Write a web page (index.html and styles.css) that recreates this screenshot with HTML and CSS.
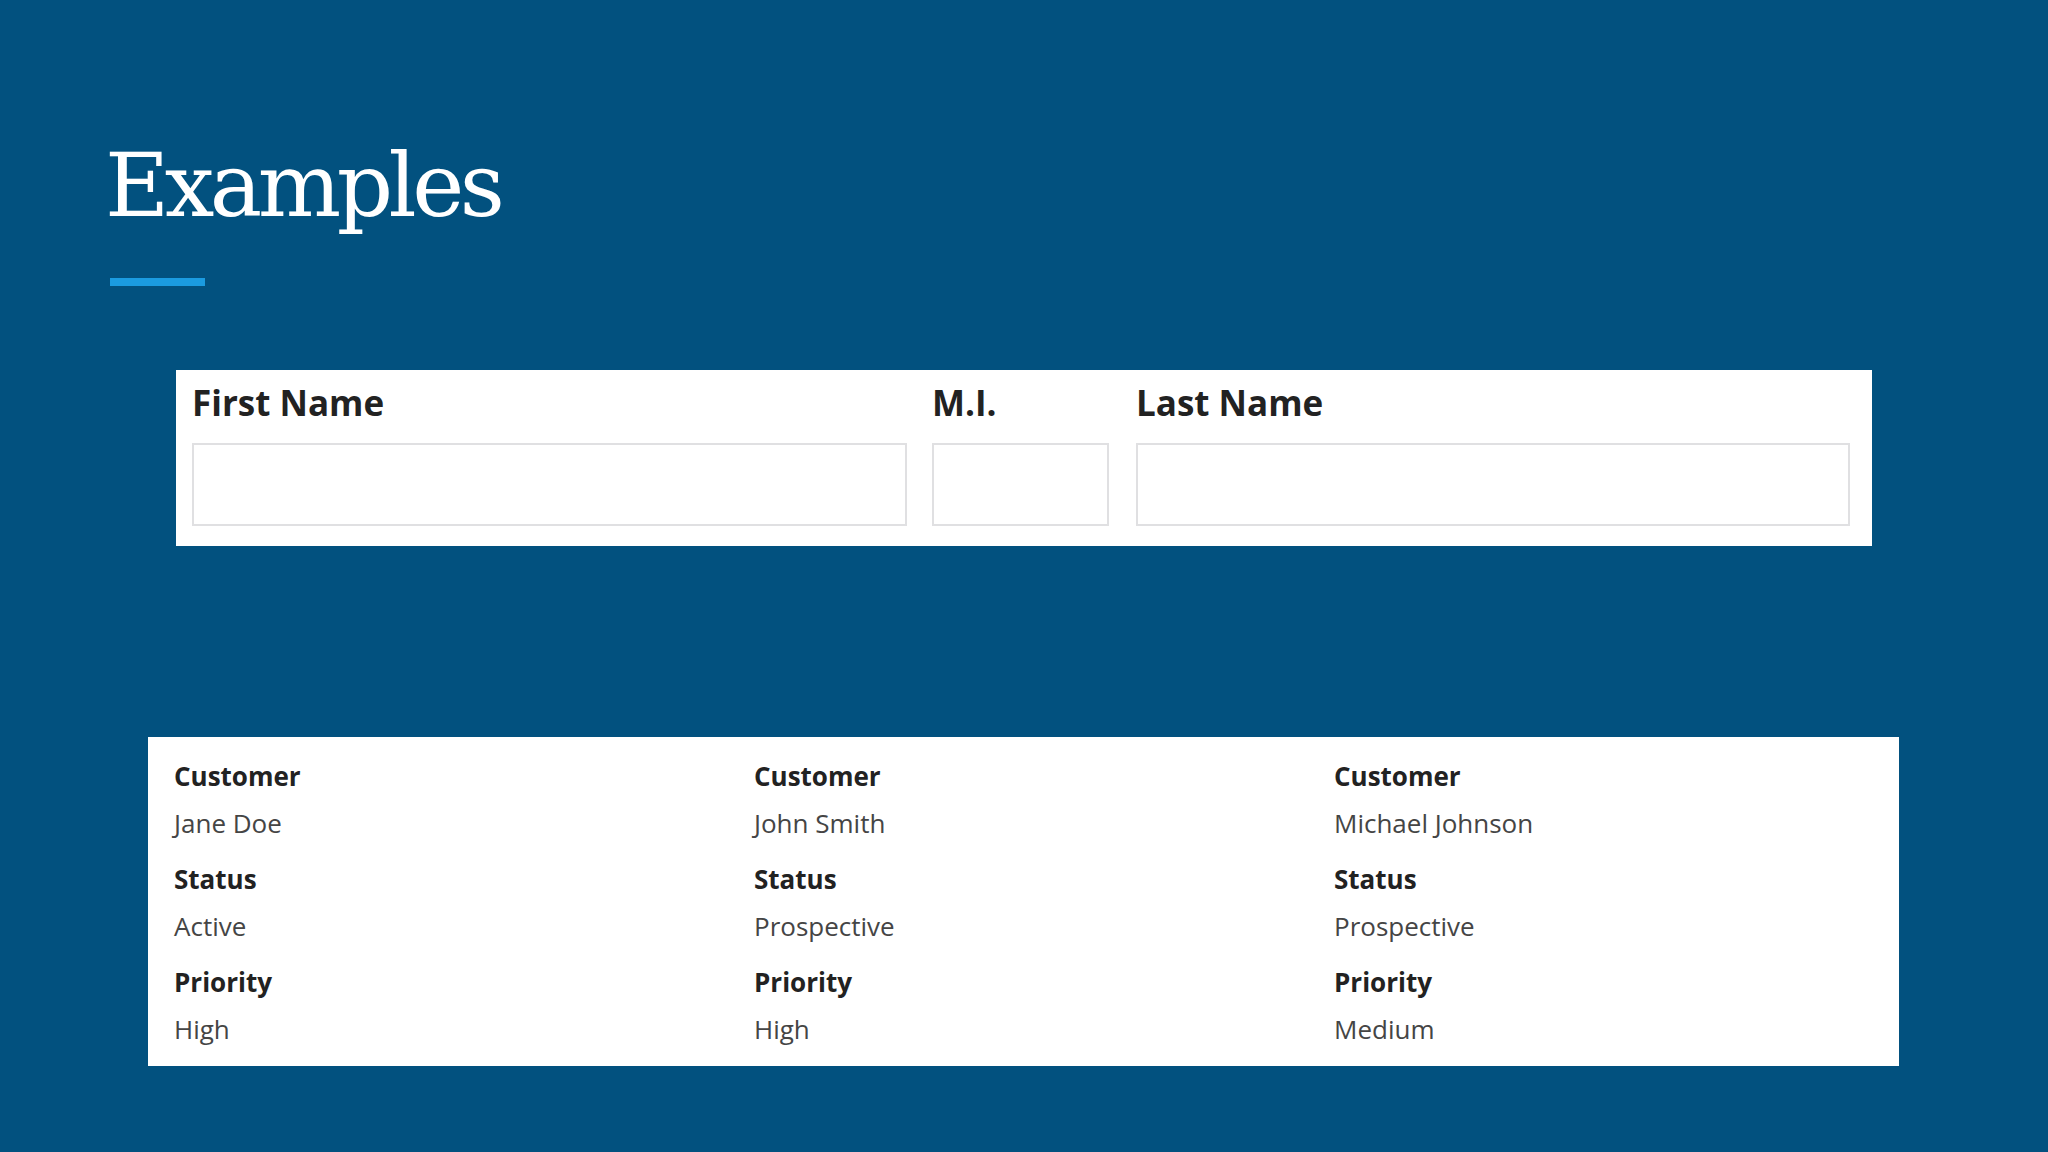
FILE: index.html
```html
<!DOCTYPE html>
<html lang="en">
<head>
<meta charset="utf-8">
<title>Examples</title>
<link rel="stylesheet" href="styles.css">
</head>
<body>
<main class="slide">
  <header class="slide-head">
    <h1 class="title">Examples</h1>
    <div class="accent"></div>
  </header>

  <section class="name-form">
    <div class="field">
      <label class="field-label">First Name</label>
      <div class="input"></div>
    </div>
    <div class="field">
      <label class="field-label">M.I.</label>
      <div class="input"></div>
    </div>
    <div class="field">
      <label class="field-label">Last Name</label>
      <div class="input"></div>
    </div>
  </section>

  <section class="cards">
    <div class="card">
      <div class="pair"><div class="k">Customer</div><div class="v">Jane Doe</div></div>
      <div class="pair"><div class="k">Status</div><div class="v">Active</div></div>
      <div class="pair"><div class="k">Priority</div><div class="v">High</div></div>
    </div>
    <div class="card">
      <div class="pair"><div class="k">Customer</div><div class="v">John Smith</div></div>
      <div class="pair"><div class="k">Status</div><div class="v">Prospective</div></div>
      <div class="pair"><div class="k">Priority</div><div class="v">High</div></div>
    </div>
    <div class="card">
      <div class="pair"><div class="k">Customer</div><div class="v">Michael Johnson</div></div>
      <div class="pair"><div class="k">Status</div><div class="v">Prospective</div></div>
      <div class="pair"><div class="k">Priority</div><div class="v">Medium</div></div>
    </div>
  </section>
</main>
</body>
</html>
```
FILE: styles.css
```css
html, body {
  margin: 0;
  padding: 0;
}
body {
  background: #02517f;
  width: 2048px;
  height: 1152px;
  overflow: hidden;
  font-family: "Open Sans", "Noto Sans", sans-serif;
}
.slide {
  display: flex;
  flex-direction: column;
  align-items: flex-start;
  padding-top: 142px;
}
.slide-head {
  padding-left: 105px;
  display: flex;
  flex-direction: column;
}
.title {
  margin: 0;
  font-family: "DejaVu Serif", "Liberation Serif", serif;
  font-weight: normal;
  font-size: 88px;
  line-height: 88px;
  letter-spacing: -4.5px;
  color: #ffffff;
}
.accent {
  margin-top: 48px;
  margin-left: 5px;
  width: 95px;
  height: 8px;
  background: #1b9be0;
}

.name-form {
  margin-top: 84px;
  margin-left: 176px;
  width: 1696px;
  box-sizing: border-box;
  background: #ffffff;
  padding: 9px 20px 20px 16px;
  display: grid;
  grid-template-columns: 715px 177px 716px;
  column-gap: 25px;
}
.name-form .field:last-child {
  margin-left: 2px;
}
.field {
  display: flex;
  flex-direction: column;
}
.field-label {
  font-weight: 700;
  font-size: 35px;
  line-height: 48px;
  color: #222222;
}
.input {
  margin-top: 16px;
  height: 83px;
  box-sizing: border-box;
  border: 2px solid #e0e0e2;
  background: #ffffff;
}

.cards {
  margin-top: 191px;
  margin-left: 148px;
  width: 1751px;
  height: 329px;
  box-sizing: border-box;
  background: #ffffff;
  padding: 15px 0 12px 26px;
  display: grid;
  grid-template-columns: 580px 580px 1fr;
}
.card {
  display: flex;
  flex-direction: column;
  gap: 8px;
}
.k {
  font-weight: 700;
  font-size: 26px;
  line-height: 48px;
  color: #222222;
}
.v {
  font-weight: 400;
  font-size: 26px;
  line-height: 47px;
  color: #454545;
}
```
